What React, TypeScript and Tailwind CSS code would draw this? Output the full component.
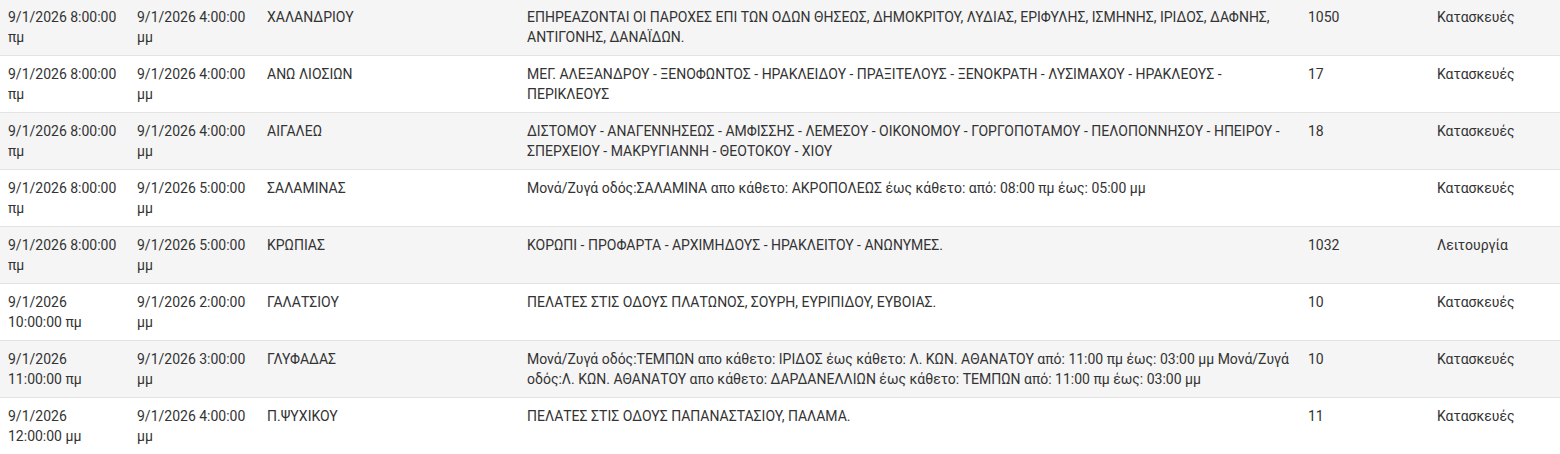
import React from "react";

type Outage = {
  from: string;
  to: string;
  area: string;
  details: string;
  code: string;
  reason: string;
};

const rows: Outage[] = [
  {
    from: "9/1/2026 8:00:00 πμ",
    to: "9/1/2026 4:00:00 μμ",
    area: "ΧΑΛΑΝΔΡΙΟΥ",
    details:
      "ΕΠΗΡΕΑΖΟΝΤΑΙ ΟΙ ΠΑΡΟΧΕΣ ΕΠΙ ΤΩΝ ΟΔΩΝ ΘΗΣΕΩΣ, ΔΗΜΟΚΡΙΤΟΥ, ΛΥΔΙΑΣ, ΕΡΙΦΥΛΗΣ, ΙΣΜΗΝΗΣ, ΙΡΙΔΟΣ, ΔΑΦΝΗΣ, ΑΝΤΙΓΟΝΗΣ, ΔΑΝΑΪΔΩΝ.",
    code: "1050",
    reason: "Κατασκευές",
  },
  {
    from: "9/1/2026 8:00:00 πμ",
    to: "9/1/2026 4:00:00 μμ",
    area: "ΑΝΩ ΛΙΟΣΙΩΝ",
    details:
      "ΜΕΓ. ΑΛΕΞΑΝΔΡΟΥ - ΞΕΝΟΦΩΝΤΟΣ - ΗΡΑΚΛΕΙΔΟΥ - ΠΡΑΞΙΤΕΛΟΥΣ - ΞΕΝΟΚΡΑΤΗ - ΛΥΣΙΜΑΧΟΥ - ΗΡΑΚΛΕΟΥΣ - ΠΕΡΙΚΛΕΟΥΣ",
    code: "17",
    reason: "Κατασκευές",
  },
  {
    from: "9/1/2026 8:00:00 πμ",
    to: "9/1/2026 4:00:00 μμ",
    area: "ΑΙΓΑΛΕΩ",
    details:
      "ΔΙΣΤΟΜΟΥ - ΑΝΑΓΕΝΝΗΣΕΩΣ - ΑΜΦΙΣΣΗΣ - ΛΕΜΕΣΟΥ - ΟΙΚΟΝΟΜΟΥ - ΓΟΡΓΟΠΟΤΑΜΟΥ - ΠΕΛΟΠΟΝΝΗΣΟΥ - ΗΠΕΙΡΟΥ - ΣΠΕΡΧΕΙΟΥ - ΜΑΚΡΥΓΙΑΝΝΗ - ΘΕΟΤΟΚΟΥ - ΧΙΟΥ",
    code: "18",
    reason: "Κατασκευές",
  },
  {
    from: "9/1/2026 8:00:00 πμ",
    to: "9/1/2026 5:00:00 μμ",
    area: "ΣΑΛΑΜΙΝΑΣ",
    details:
      "Μονά/Ζυγά οδός:ΣΑΛΑΜΙΝΑ απο κάθετο: ΑΚΡΟΠΟΛΕΩΣ έως κάθετο: από: 08:00 πμ έως: 05:00 μμ",
    code: "",
    reason: "Κατασκευές",
  },
  {
    from: "9/1/2026 8:00:00 πμ",
    to: "9/1/2026 5:00:00 μμ",
    area: "ΚΡΩΠΙΑΣ",
    details: "ΚΟΡΩΠΙ - ΠΡΟΦΑΡΤΑ - ΑΡΧΙΜΗΔΟΥΣ - ΗΡΑΚΛΕΙΤΟΥ - ΑΝΩΝΥΜΕΣ.",
    code: "1032",
    reason: "Λειτουργία",
  },
  {
    from: "9/1/2026 10:00:00 πμ",
    to: "9/1/2026 2:00:00 μμ",
    area: "ΓΑΛΑΤΣΙΟΥ",
    details: "ΠΕΛΑΤΕΣ ΣΤΙΣ ΟΔΟΥΣ ΠΛΑΤΩΝΟΣ, ΣΟΥΡΗ, ΕΥΡΙΠΙΔΟΥ, ΕΥΒΟΙΑΣ.",
    code: "10",
    reason: "Κατασκευές",
  },
  {
    from: "9/1/2026 11:00:00 πμ",
    to: "9/1/2026 3:00:00 μμ",
    area: "ΓΛΥΦΑΔΑΣ",
    details:
      "Μονά/Ζυγά οδός:ΤΕΜΠΩΝ απο κάθετο: ΙΡΙΔΟΣ έως κάθετο: Λ. ΚΩΝ. ΑΘΑΝΑΤΟΥ από: 11:00 πμ έως: 03:00 μμ Μονά/Ζυγά οδός:Λ. ΚΩΝ. ΑΘΑΝΑΤΟΥ απο κάθετο: ΔΑΡΔΑΝΕΛΛΙΩΝ έως κάθετο: ΤΕΜΠΩΝ από: 11:00 πμ έως: 03:00 μμ",
    code: "10",
    reason: "Κατασκευές",
  },
  {
    from: "9/1/2026 12:00:00 μμ",
    to: "9/1/2026 4:00:00 μμ",
    area: "Π.ΨΥΧΙΚΟΥ",
    details: "ΠΕΛΑΤΕΣ ΣΤΙΣ ΟΔΟΥΣ ΠΑΠΑΝΑΣΤΑΣΙΟΥ, ΠΑΛΑΜΑ.",
    code: "11",
    reason: "Κατασκευές",
  },
];

const App = () => {
  return (
    <div className="w-[1560px] h-[454px] overflow-hidden bg-white font-['Roboto',sans-serif] text-[14px] leading-[20px] text-[#333]">
      {/* outage table, top row slightly scrolled off */}
      <table className="w-full table-fixed border-collapse -mt-[2px]">
        <colgroup>
          <col className="w-[129px]" />
          <col className="w-[130px]" />
          <col className="w-[260px]" />
          <col className="w-[781px]" />
          <col className="w-[129px]" />
          <col />
        </colgroup>
        <tbody>
          {rows.map((r, i) => (
            <tr
              key={i}
              className={`border-t border-[#e3e3e3] align-top ${
                i % 2 === 0 ? "bg-[#f5f5f5]" : "bg-white"
              }`}
            >
              <td className="px-2 pt-2 pb-2 h-[57px]">{r.from}</td>
              <td className="px-2 pt-2 pb-2">{r.to}</td>
              <td className="px-2 pt-2 pb-2">{r.area}</td>
              <td className="px-2 pt-2 pb-2">{r.details}</td>
              <td className="px-2 pt-2 pb-2">{r.code}</td>
              <td className="px-2 pt-2 pb-2">{r.reason}</td>
            </tr>
          ))}
        </tbody>
      </table>
    </div>
  );
};

export default App;
